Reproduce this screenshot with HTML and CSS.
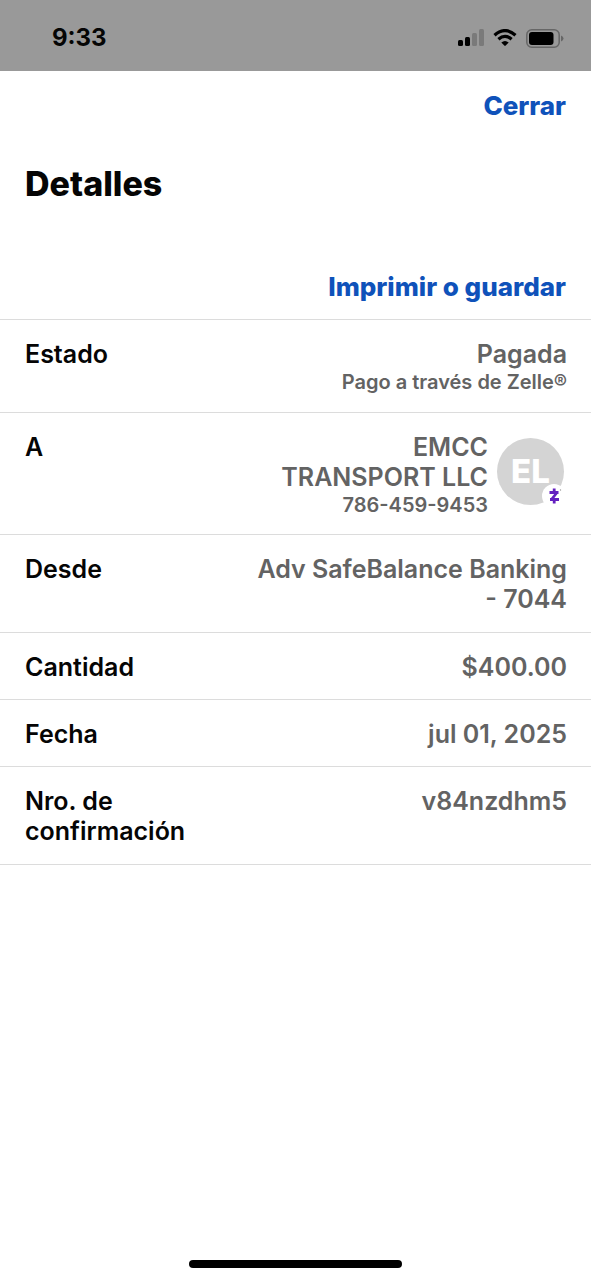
FILE: index.html
```html
<!DOCTYPE html>
<html lang="es">
<head>
<meta charset="utf-8">
<meta name="viewport" content="width=device-width, initial-scale=1">
<title>Detalles</title>
<link rel="stylesheet" href="styles.css">
</head>
<body>
<div class="screen">
  <header class="status">
    <time class="clock">9:33</time>
    <div class="indicators">
      <svg class="signal" width="26" height="18" viewBox="0 0 26 18" aria-hidden="true">
        <rect x="0" y="11" width="5" height="6" rx="1.5"/>
        <rect x="7" y="8" width="5" height="9" rx="1.5"/>
        <rect class="faint" x="14" y="4" width="5" height="13" rx="1.5"/>
        <rect class="faint" x="21" y="0" width="5" height="17" rx="1.5"/>
      </svg>
      <svg class="wifi" width="24" height="18" viewBox="0 0 24 18" aria-hidden="true">
        <path class="arc" d="M1.5 6.2Q12-3 22.500 6.200"/>
        <path class="arc" d="M5.400 10.200Q12 4.400 18.600 10.200"/>
        <path d="M8.300 13.500Q12 10.500 15.700 13.500L12.700 16.600Q12 17.300 11.300 16.600Z"/>
      </svg>
      <svg class="battery" width="38" height="19" viewBox="0 0 38 19" aria-hidden="true">
        <rect class="shell" x="0.800" y="0.800" width="32.400" height="17.400" rx="5"/>
        <rect x="3" y="3" width="24.500" height="13" rx="3"/>
        <path class="tip" d="M35 6.500Q37.500 7.500 37.500 9.500T35 12.500Z"/>
      </svg>
    </div>
  </header>
  <main class="sheet">
    <div class="actions"><button class="link" type="button">Cerrar</button></div>
    <h1 class="title">Detalles</h1>
    <div class="actions print"><button class="link" type="button">Imprimir o guardar</button></div>
    <dl class="details">
      <div class="row">
        <dt class="label">Estado</dt>
        <dd class="value">Pagada<span class="note">Pago a través de Zelle®</span></dd>
      </div>
      <div class="row recipient">
        <dt class="label">A</dt>
        <dd class="value contact">
          <div class="name">EMCC TRANSPORT LLC<span class="note">786-459-9453</span></div>
          <div class="avatar">EL
            <svg class="badge" width="24" height="24" viewBox="0 0 24 24" role="img" aria-label="Zelle">
              <circle class="disc" cx="12" cy="12" r="12"/>
              <path class="zed" d="M7.500 8.500H16.500M15 8.500L9.500 15.500M8 15.500H17M12.200 4.500V8.500M12.200 15.500V19.500"/>
              <circle class="dot" cx="18.500" cy="6" r="0.700"/>
            </svg>
          </div>
        </dd>
      </div>
      <div class="row tall">
        <dt class="label">Desde</dt>
        <dd class="value">Adv SafeBalance Banking - 7044</dd>
      </div>
      <div class="row">
        <dt class="label">Cantidad</dt>
        <dd class="value">$400.00</dd>
      </div>
      <div class="row">
        <dt class="label">Fecha</dt>
        <dd class="value">jul 01, 2025</dd>
      </div>
      <div class="row tall">
        <dt class="label">Nro. de confirmación</dt>
        <dd class="value">v84nzdhm5</dd>
      </div>
    </dl>
  </main>
  <div class="home"></div>
</div>
</body>
</html>
```
FILE: styles.css
```css
* {
  box-sizing: border-box;
}

body {
  margin: 0;
  background: #fff;
  color: #050505;
  font-family: Inter, "Liberation Sans", sans-serif;
  font-size: 25px;
  font-weight: 600;
  line-height: 30px;
}

.screen {
  display: flex;
  flex-direction: column;
  min-height: 100vh;
}

.status {
  display: flex;
  justify-content: space-between;
  align-items: center;
  padding: 20px 27px 15px 52px;
  background: #999;
  line-height: 36px;
}

.clock {
  font-size: 24px;
  font-weight: 700;
}

.indicators {
  display: flex;
  align-items: center;
  gap: 9px;
}

.faint {
  fill: #7a7a7a;
}

.arc {
  fill: none;
  stroke: #000;
  stroke-width: 3.2;
}

.shell {
  fill: none;
  stroke: #666;
  stroke-width: 1.5;
}

.tip {
  fill: #666;
}

.sheet {
  flex: 1;
  padding-top: 20px;
}

.actions {
  display: flex;
  justify-content: flex-end;
  padding: 0 25px;
}

.link {
  padding: 0;
  border: 0;
  background: none;
  color: #0f52ba;
  font: inherit;
  font-size: 26px;
  font-weight: 800;
}

.title {
  margin: 42px 25px 67px;
  font-size: 34px;
  font-weight: 800;
  line-height: 42px;
}

.print {
  padding-bottom: 17px;
}

.details {
  margin: 0;
  border-top: 1px solid #dcdcdc;
}

.row {
  display: flex;
  justify-content: space-between;
  gap: 24px;
  padding: 19px 24px 17px 25px;
  border-bottom: 1px solid #dcdcdc;
}

.recipient {
  padding-bottom: 16px;
}

.tall {
  padding-bottom: 18px;
}

.label {
  flex: 0 1 180px;
}

.value {
  flex: 0 1 312px;
  margin: 0;
  color: #636363;
  text-align: right;
}

.note {
  display: block;
  font-size: 20px;
  line-height: 26px;
}

.contact {
  display: flex;
  justify-content: flex-end;
  align-items: flex-start;
  gap: 9px;
  padding-right: 3px;
}

.name {
  max-width: 220px;
}

.avatar {
  position: relative;
  flex: none;
  width: 67px;
  height: 67px;
  margin-top: 6px;
  border-radius: 50%;
  background: #d4d4d4;
  color: #fff;
  font-size: 33px;
  font-weight: 800;
  line-height: 67px;
  text-align: center;
}

.badge {
  position: absolute;
  right: -2px;
  bottom: -3px;
}

.disc {
  fill: #fff;
}

.zed {
  fill: none;
  stroke: #6420c0;
  stroke-width: 2.8;
}

.dot {
  fill: #999;
}

.home {
  align-self: center;
  width: 36%;
  height: 8px;
  margin-bottom: 12px;
  border-radius: 4px;
  background: #000;
}
```
